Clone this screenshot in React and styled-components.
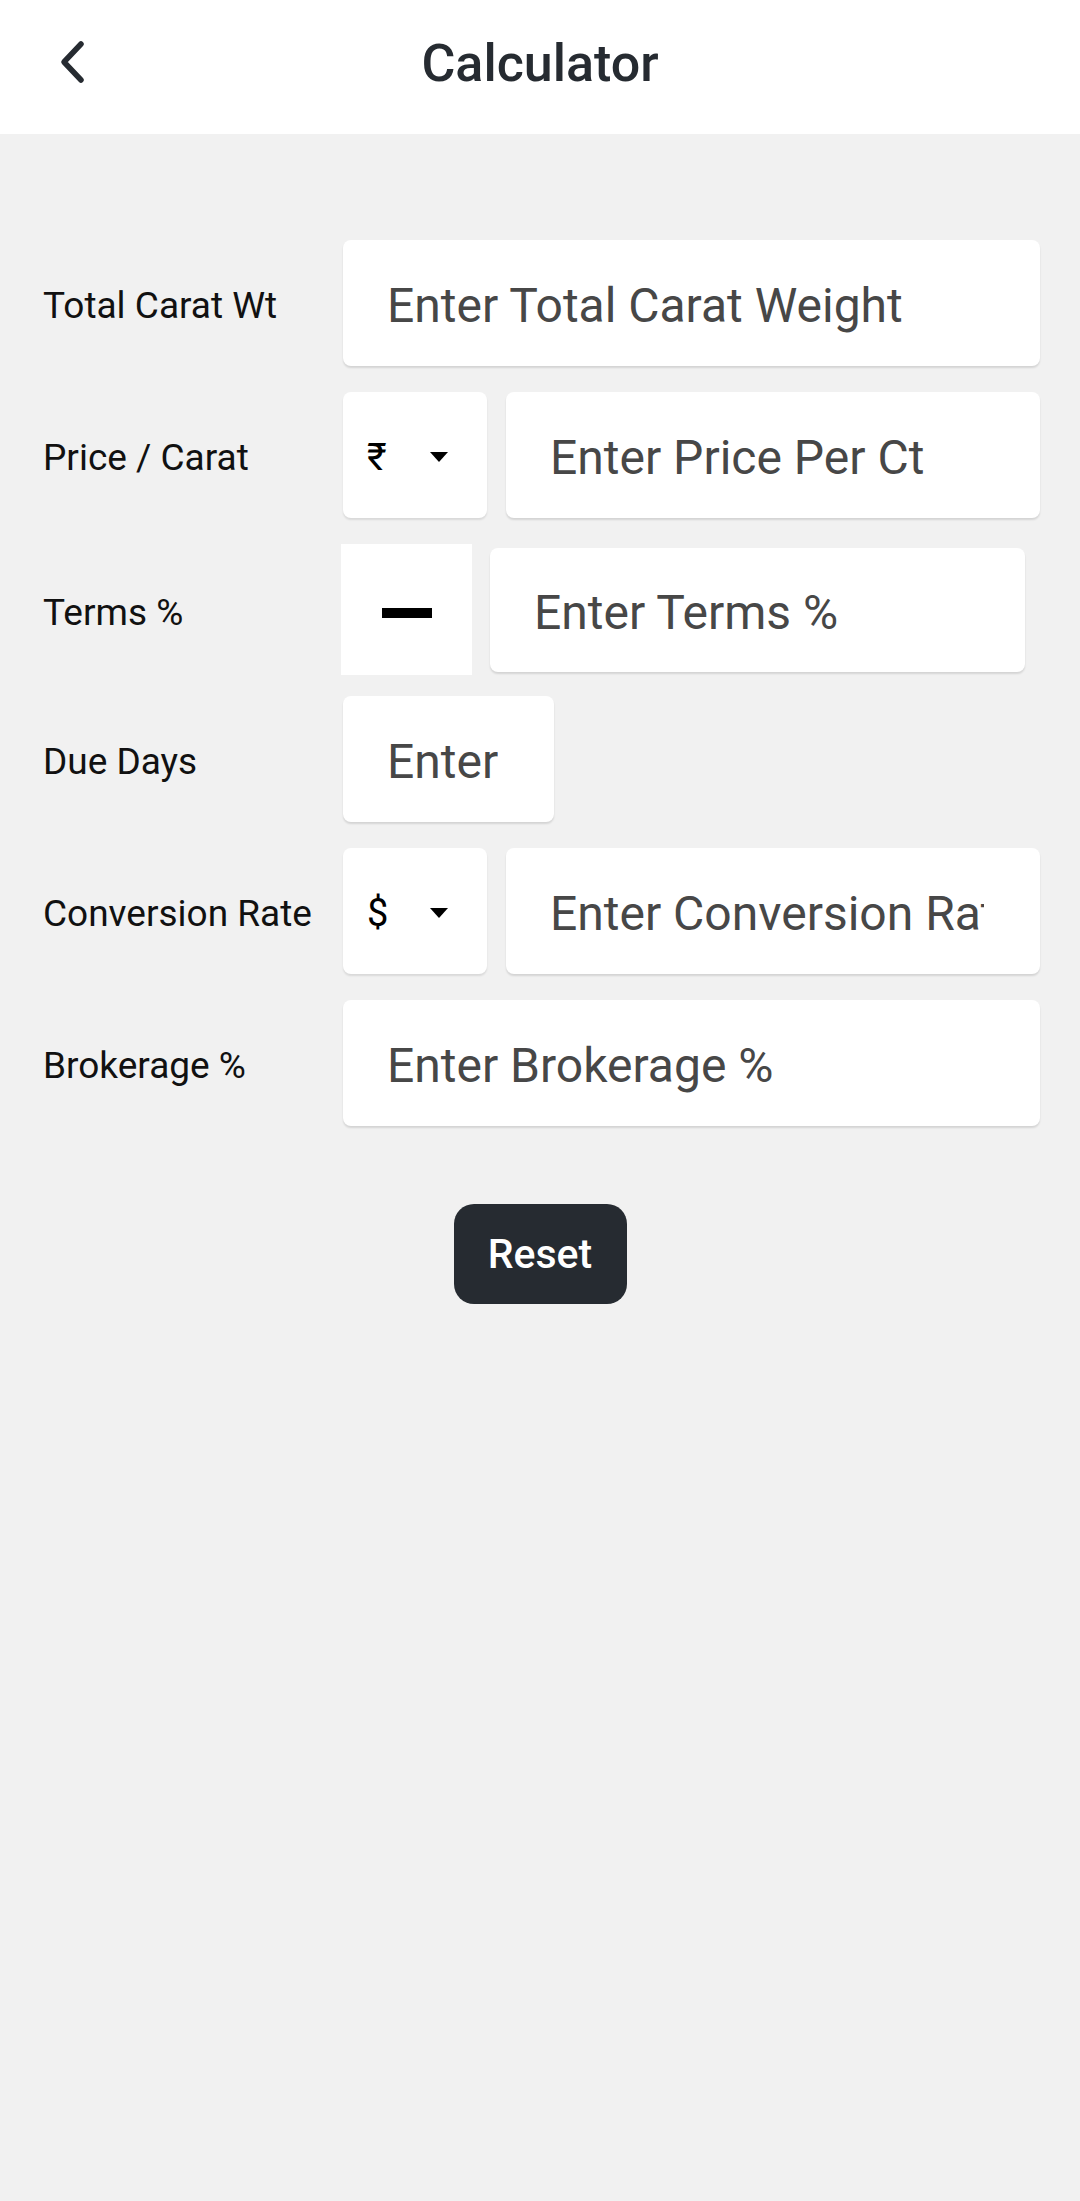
import styled, { createGlobalStyle } from 'styled-components'

const GlobalStyle = createGlobalStyle`
  body {
    margin: 0;
    background: #f1f1f1;
    font-family: Roboto, "Noto Sans", "Liberation Sans", sans-serif;
  }
`

const Page = styled.div`
  min-height: 100vh;
  background: #f1f1f1;
`

const Header = styled.header`
  display: grid;
  grid-template-columns: 1fr auto 1fr;
  align-items: center;
  height: 134px;
  background: #ffffff;
`

const BackButton = styled.button`
  justify-self: start;
  display: flex;
  align-items: center;
  background: none;
  border: none;
  padding: 0 0 0 58px;
  margin-top: -8px;
  cursor: pointer;
`

const Title = styled.h1`
  margin: -8px 0 0;
  font-size: 52px;
  font-weight: 500;
  color: #262b31;
`

const Form = styled.div`
  display: flex;
  flex-direction: column;
  gap: 26px;
  padding: 106px 40px 0 43px;
`

const Row = styled.div`
  display: grid;
  grid-template-columns: 300px minmax(0, 1fr);
  align-items: center;
  height: 126px;
`

const Label = styled.label`
  padding-top: 5px;
  font-size: 37px;
  color: #111111;
`

const Controls = styled.div`
  display: flex;
  gap: ${p => p.$gap || 19}px;
  min-width: 0;
  height: 100%;
  margin: 0 ${p => p.$right || 0}px 0 ${p => p.$left || 0}px;
`

const Input = styled.input`
  box-sizing: border-box;
  flex: ${p => (p.$width ? `0 0 ${p.$width}px` : '1 1 0')};
  width: 0;
  min-width: 0;
  height: ${p => p.$height || 126}px;
  align-self: center;
  padding: 5px 56px 0 44px;
  border: none;
  border-radius: 8px;
  background: #ffffff;
  box-shadow: 0 2px 2px rgba(0, 0, 0, 0.12);
  font-family: inherit;
  font-size: 48px;
  color: #222;
  outline: none;

  &::placeholder {
    color: #474747;
  }
`

const CurrencySelect = styled.div`
  box-sizing: border-box;
  flex: 0 0 144px;
  display: flex;
  align-items: center;
  justify-content: space-between;
  padding: 4px 39px 0 24px;
  border-radius: 8px;
  background: #ffffff;
  box-shadow: 0 2px 2px rgba(0, 0, 0, 0.1);
  font-size: 38px;
  color: #000;
  cursor: pointer;
`

const Caret = styled.span`
  width: 0;
  height: 0;
  border-left: 9px solid transparent;
  border-right: 9px solid transparent;
  border-top: 10px solid #000;
`

const MinusButton = styled.button`
  flex: 0 0 131px;
  height: 131px;
  align-self: center;
  display: flex;
  align-items: center;
  justify-content: center;
  padding: 0;
  border: none;
  background: #ffffff;
  cursor: pointer;
`

const MinusBar = styled.span`
  width: 50px;
  height: 10px;
  margin-top: 6px;
  background: #000;
`

const Footer = styled.div`
  display: flex;
  justify-content: center;
  padding-top: 78px;
`

const ResetButton = styled.button`
  width: 173px;
  height: 100px;
  border: none;
  border-radius: 20px;
  background: #262b31;
  color: #ffffff;
  font-family: inherit;
  font-size: 41px;
  font-weight: 500;
  cursor: pointer;
`

const BackIcon = () => (
  <svg width="30" height="46" viewBox="0 0 30 46">
    <polyline
      points="23,4 6,22 23,40"
      fill="none"
      stroke="#262b31"
      strokeWidth="5.5"
      strokeLinecap="round"
      strokeLinejoin="round"
    />
  </svg>
)

const Currency = ({ symbol }) => (
  <CurrencySelect>
    <span>{symbol}</span>
    <Caret />
  </CurrencySelect>
)

export default function App() {
  return (
    <Page>
      <GlobalStyle />
      <Header>
        <BackButton aria-label="Back">
          <BackIcon />
        </BackButton>
        <Title>Calculator</Title>
      </Header>

      <Form>
        <Row>
          <Label>Total Carat Wt</Label>
          <Controls>
            <Input placeholder="Enter Total Carat Weight" />
          </Controls>
        </Row>

        <Row>
          <Label>Price / Carat</Label>
          <Controls>
            <Currency symbol="₹" />
            <Input placeholder="Enter Price Per Ct" />
          </Controls>
        </Row>

        <Row>
          <Label>Terms %</Label>
          <Controls $gap={18} $left={-2} $right={15}>
            <MinusButton aria-label="Toggle sign">
              <MinusBar />
            </MinusButton>
            <Input $height={124} placeholder="Enter Terms %" />
          </Controls>
        </Row>

        <Row>
          <Label>Due Days</Label>
          <Controls>
            <Input $width={211} placeholder="Enter Due Days" />
          </Controls>
        </Row>

        <Row>
          <Label>Conversion Rate</Label>
          <Controls>
            <Currency symbol="$" />
            <Input placeholder="Enter Conversion Rate" />
          </Controls>
        </Row>

        <Row>
          <Label>Brokerage %</Label>
          <Controls>
            <Input placeholder="Enter Brokerage %" />
          </Controls>
        </Row>
      </Form>

      <Footer>
        <ResetButton>Reset</ResetButton>
      </Footer>
    </Page>
  )
}
